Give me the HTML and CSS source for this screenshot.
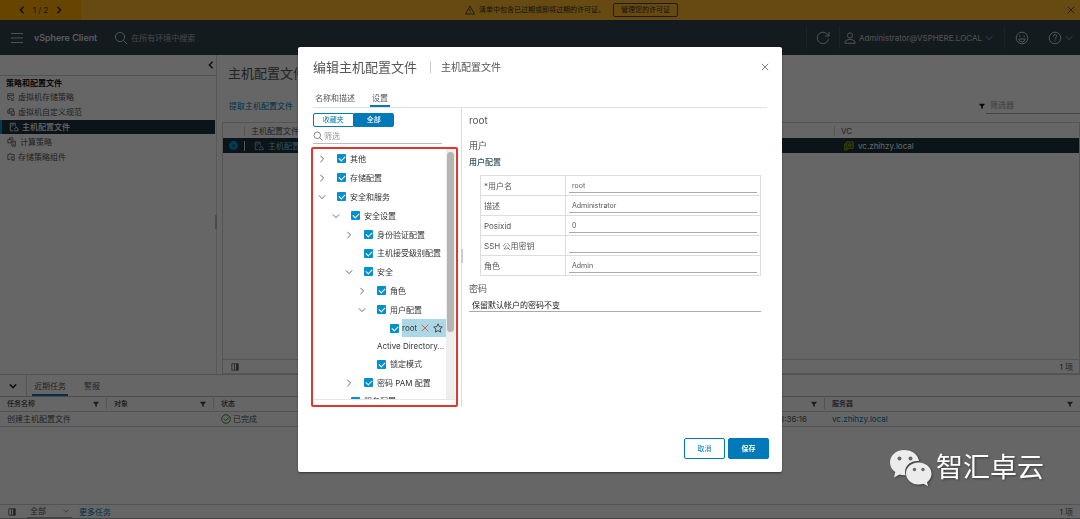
FILE: index.html
```html
<!DOCTYPE html>
<html lang="zh-CN">
<head>
<meta charset="utf-8">
<title>vSphere Client</title>
<link rel="stylesheet" href="styles.css">
</head>
<body>
<svg class="sprite" aria-hidden="true">
  <symbol id="i-right" viewBox="0 0 10 10"><path d="M3 1l4 4-4 4"/></symbol>
  <symbol id="i-left" viewBox="0 0 10 10"><path d="M7 1L3 5l4 4"/></symbol>
  <symbol id="i-down" viewBox="0 0 10 10"><path d="M1 3l4 4 4-4"/></symbol>
  <symbol id="i-close" viewBox="0 0 10 10"><path d="M1 1l8 8M9 1L1 9"/></symbol>
  <symbol id="i-search" viewBox="0 0 14 14"><circle cx="6" cy="6" r="4.6"/><path d="M9.4 9.4l4 4"/></symbol>
  <symbol id="i-funnel" viewBox="0 0 8 8"><path class="solid" d="M.5 1h7v1L5 4.500V8L3 7V4.500L.5 2z"/></symbol>
  <symbol id="i-cols" viewBox="0 0 10 10"><path d="M1 1h8v8H1zM4.500 1v8"/><path class="solid" d="M6.500 1H9v8H6.500z"/></symbol>
  <symbol id="i-storage" viewBox="0 0 10 10"><path d="M8 4V1H1v7h3M1 3.3h7M2.5 5.5h2M5 6l1.5 2L9 5M5 9h4"/></symbol>
  <symbol id="i-spec" viewBox="0 0 10 10"><path d="M3 6.5H1v-4h2M3 7V1h5v3M5 4h4v5H5z M5 6l4 3"/></symbol>
  <symbol id="i-host" viewBox="0 0 12 12"><path d="M5 10.5H1.5v-9h6V5M3 3.5h3M3 5.5h1M6 10.5h5M6.5 9L8 6.5h1.5L11 9v1.5"/></symbol>
  <symbol id="i-compute" viewBox="0 0 12 12"><path d="M1 3h4v4H1zM3 3V1h4v3M6 5h4v6H6zM7.300 7h1.500M7.300 9h1.500"/></symbol>
  <symbol id="i-comp" viewBox="0 0 10 10"><path d="M4 8H1V2h2V1h2v1h4v2M5 5l4 0v4H6M5 5v2l3 2"/></symbol>
</svg>

<div class="app">
  <div class="banner">
    <div class="pager">
      <button aria-label="上一条"><svg class="ico s8 bold"><use href="#i-left"/></svg></button>
      <span>1 / 2</span>
      <button aria-label="下一条"><svg class="ico s8 bold"><use href="#i-right"/></svg></button>
    </div>
    <div class="notice">
      <svg class="ico s10" viewBox="0 0 12 12"><path d="M6 1.200L11.300 10.800H.7zM6 4.500v3M6 8.500v1"/></svg>
      <span>清单中包含已过期或即将过期的许可证。</span>
      <button class="license">管理您的许可证</button>
    </div>
    <button class="dismiss" aria-label="关闭"><svg class="ico s8"><use href="#i-close"/></svg></button>
  </div>

  <header class="topbar">
    <button aria-label="菜单"><svg class="ico s12" viewBox="0 0 12 12"><path d="M0 1.500h12M0 6h12M0 10.500h12"/></svg></button>
    <span class="brand">vSphere Client</span>
    <label class="search"><svg class="ico s14"><use href="#i-search"/></svg><input type="text" placeholder="在所有环境中搜索" aria-label="搜索"></label>
    <button class="cell" aria-label="刷新"><svg class="ico s14" viewBox="0 0 14 14"><path d="M12.500 8.200A5.700 5.700 0 1 1 11.500 3.500L13 5M13 1v4H9"/></svg></button>
    <button class="cell user"><svg class="ico s12" viewBox="0 0 12 12"><circle cx="6" cy="3.500" r="2.600"/><path d="M1 11.300V9.500Q3 7.300 6 7.300t5 2.200v1.800z"/></svg><span>Administrator@VSPHERE.LOCAL</span><svg class="ico s8"><use href="#i-down"/></svg></button>
    <button class="cell face" aria-label="反馈"><svg class="ico s14" viewBox="0 0 14 14"><circle cx="7" cy="7" r="5.800"/><path d="M4.800 4.500v1.500M9.200 4.500v1.500M3.800 8h6.400Q9.800 11 7 11T3.800 8z"/></svg></button>
    <button class="help" aria-label="帮助"><svg class="ico s14" viewBox="0 0 14 14"><circle cx="7" cy="7" r="5.800"/><path d="M5.200 5.500Q5.200 3.700 7 3.700t1.800 1.700Q8.800 6.500 7 7.300v1.200M7 9.500v1"/></svg><svg class="ico s8"><use href="#i-down"/></svg></button>
  </header>

  <div class="workspace">
    <nav class="sidebar">
      <div class="collapse"><button aria-label="折叠"><svg class="ico s8 bold"><use href="#i-left"/></svg></button></div>
      <h2>策略和配置文件</h2>
      <a href="#"><svg class="ico s8"><use href="#i-storage"/></svg>虚拟机存储策略</a>
      <a href="#"><svg class="ico s8"><use href="#i-spec"/></svg>虚拟机自定义规范</a>
      <a href="#" class="current"><svg class="ico s10"><use href="#i-host"/></svg>主机配置文件</a>
      <a href="#"><svg class="ico s10"><use href="#i-compute"/></svg>计算策略</a>
      <a href="#"><svg class="ico s8"><use href="#i-comp"/></svg>存储策略组件</a>
    </nav>
    <main class="main">
      <h1>主机配置文件</h1>
      <div class="actions">
        <a href="#">提取主机配置文件</a>
        <label><svg class="ico s6"><use href="#i-funnel"/></svg><input type="text" placeholder="筛选器" aria-label="筛选器"></label>
      </div>
      <div class="grid">
        <table>
          <thead><tr><th class="pick"></th><th class="name"><span>主机配置文件名称</span></th><th class="vc"><span>VC</span></th></tr></thead>
          <tbody><tr><td class="pick"><input type="radio" checked aria-label="选择"></td><td class="name"><span><svg class="ico s10"><use href="#i-host"/></svg>主机配置文件</span></td><td class="vc"><span><svg class="ico s10 vcicon" viewBox="0 0 10 10"><path d="M3 7.500V9H.8V3H2.500M2.800 7.200V1H9v6.200zM4.800 3H7v2.200H4.800z"/></svg>vc.zhihzy.local</span></td></tr></tbody>
        </table>
        <div class="gridfoot"><svg class="ico s8"><use href="#i-cols"/></svg><span>1 项</span></div>
      </div>
    </main>
  </div>

  <section class="tasks">
    <div class="tasktabs">
      <button class="toggle" aria-label="折叠"><svg class="ico s8 bold"><use href="#i-down"/></svg></button>
      <button class="tab on">近期任务</button>
      <button class="tab">警报</button>
    </div>
    <table>
      <thead><tr>
        <th class="c"><span>任务名称<svg class="ico s6"><use href="#i-funnel"/></svg></span></th>
        <th class="c"><span>对象<svg class="ico s6"><use href="#i-funnel"/></svg></span></th>
        <th class="c"><span>状态</span></th>
        <th><span><svg class="ico s6"><use href="#i-funnel"/></svg></span></th>
        <th class="server"><span>服务器<svg class="ico s6"><use href="#i-funnel"/></svg></span></th>
      </tr></thead>
      <tbody><tr>
        <td>创建主机配置文件</td><td></td>
        <td><span class="done"><svg class="ico s10" viewBox="0 0 10 10"><circle cx="5" cy="5" r="4.300"/><path d="M2.800 5l1.700 1.700L7.500 3.500"/></svg>已完成</span></td>
        <td class="time">13:36:16</td><td><a href="#">vc.zhihzy.local</a></td>
      </tr></tbody>
    </table>
    <div class="taskfoot"><svg class="ico s8"><use href="#i-cols"/></svg><span class="pickall"><select aria-label="任务范围"><option>全部</option></select><svg class="ico s6"><use href="#i-down"/></svg></span><a href="#">更多任务</a><span class="count">1 项</span></div>
  </section>
</div>

<div class="backdrop">
  <div class="modal" role="dialog" aria-labelledby="dlg">
    <div class="mhead">
      <h2 id="dlg">编辑主机配置文件</h2><span class="sub">主机配置文件</span>
      <button aria-label="关闭"><svg class="ico s8"><use href="#i-close"/></svg></button>
    </div>
    <div class="mtabs"><button>名称和描述</button><button class="on">设置</button></div>
    <div class="mbody">
      <div class="left">
        <div class="seg"><button>收藏夹</button><button class="on">全部</button></div>
        <label class="filter"><svg class="ico s10"><use href="#i-search"/></svg><input type="text" placeholder="筛选" aria-label="筛选"></label>
        <div class="treebox">
          <div class="view">
            <ul class="tree">
              <li class="l0"><svg class="ico s8"><use href="#i-right"/></svg><label><input type="checkbox" checked>其他</label></li>
              <li class="l0"><svg class="ico s8"><use href="#i-right"/></svg><label><input type="checkbox" checked>存储配置</label></li>
              <li class="l0"><svg class="ico s8"><use href="#i-down"/></svg><label><input type="checkbox" checked>安全和服务</label></li>
              <li class="l1"><svg class="ico s8"><use href="#i-down"/></svg><label><input type="checkbox" checked>安全设置</label></li>
              <li class="l2"><svg class="ico s8"><use href="#i-right"/></svg><label><input type="checkbox" checked>身份验证配置</label></li>
              <li class="l2 leaf"><label><input type="checkbox" checked>主机接受级别配置</label></li>
              <li class="l2"><svg class="ico s8"><use href="#i-down"/></svg><label><input type="checkbox" checked>安全</label></li>
              <li class="l3"><svg class="ico s8"><use href="#i-right"/></svg><label><input type="checkbox" checked>角色</label></li>
              <li class="l3"><svg class="ico s8"><use href="#i-down"/></svg><label><input type="checkbox" checked>用户配置</label></li>
              <li class="l4 leaf"><input type="checkbox" checked id="root"><span class="picked"><label for="root">root</label><svg class="ico s8 red"><use href="#i-close"/></svg><svg class="ico s10" viewBox="0 0 12 12"><path d="M6 1l1.500 3.400 3.700.4-2.800 2.500.8 3.700L6 9.100 2.800 11l.8-3.700L.8 4.800l3.700-.4z"/></svg></span></li>
              <li class="l3 leaf plain">Active Directory...</li>
              <li class="l3 leaf"><label><input type="checkbox" checked>锁定模式</label></li>
              <li class="l2"><svg class="ico s8"><use href="#i-right"/></svg><label><input type="checkbox" checked>密码 PAM 配置</label></li>
              <li class="l1 leaf"><label><input type="checkbox" checked>服务配置</label></li>
            </ul>
            <div class="bar"><div class="thumb"></div></div>
          </div>
        </div>
      </div>
      <div class="detail">
        <h3>root</h3>
        <h4>用户</h4>
        <h5>用户配置</h5>
        <table class="form">
          <tr><th><label for="f1">*用户名</label></th><td><input id="f1" type="text" value="root"></td></tr>
          <tr><th><label for="f2">描述</label></th><td><input id="f2" type="text" value="Administrator"></td></tr>
          <tr><th><label for="f3">Posixid</label></th><td><input id="f3" type="text" value="0"></td></tr>
          <tr><th><label for="f4">SSH 公用密钥</label></th><td><input id="f4" type="text"></td></tr>
          <tr><th><label for="f5">角色</label></th><td><input id="f5" type="text" value="Admin"></td></tr>
        </table>
        <h4><label for="pw">密码</label></h4>
        <select id="pw"><option>保留默认帐户的密码不变</option></select>
      </div>
    </div>
    <div class="mfoot"><button>取消</button><button class="primary">保存</button></div>
  </div>
</div>

<div class="mark">
  <svg viewBox="0 0 43 38" width="43" height="38">
    <path fill="#ececec" d="M15 1C7 1 1 6.500 1 13.500c0 4 2 7.300 5.300 9.600L5 28.500l5.500-3q3 .8 6 .7C14 17 22 11 30 12 29 5.500 23 1 15 1z"/>
    <path fill="#ececec" d="M29.500 13.500C22 13.500 17 18.500 17 24.500s5.500 11 12.500 11q2.500 0 5-.8l4.500 2.500-1-4c2.700-2 4.500-5 4.500-8.500 0-6.200-5.500-11.200-13-11.200z"/>
    <g fill="#666"><circle cx="10.500" cy="9.500" r="2"/><circle cx="21.500" cy="9.500" r="2"/><circle cx="25.500" cy="20.500" r="1.700"/><circle cx="34" cy="20.500" r="1.700"/></g>
  </svg>
  <span>智汇卓云</span>
</div>
</body>
</html>
```

FILE: styles.css
```css
* { box-sizing: border-box; }
body {
  margin: 0;
  font: 8px/12px Inter, "Noto Sans CJK SC", sans-serif;
  color: #565656;
}
h1, h2, h3, h4, h5, ul { margin: 0; padding: 0; font-weight: 400; list-style: none; }
button, input, select { font: inherit; color: inherit; background: none; border: 0; padding: 0; margin: 0; border-radius: 0; min-width: 0; outline: 0; }
button { display: inline-flex; align-items: center; justify-content: center; }
select { appearance: none; }
a { color: #0079b8; text-decoration: none; }
table { border-collapse: collapse; width: 100%; table-layout: fixed; }
th, td { padding: 0; text-align: left; font-weight: 400; }
.sprite { position: absolute; width: 0; height: 0; }
.ico { fill: none; stroke: currentColor; stroke-width: 1; flex: none; }
.solid { fill: currentColor; stroke: none; }
.bold { stroke-width: 2; }
.s6 { width: 6px; height: 6px; }
.s8 { width: 8px; height: 8px; }
.s10 { width: 10px; height: 10px; }
.s12 { width: 12px; height: 12px; }
.s14 { width: 14px; height: 14px; }

.app { min-height: 100vh; display: flex; flex-direction: column; background: #fff; }

.banner { display: flex; align-items: center; height: 20px; background: #ffb92c; color: #333; font-size: 7px; }
.pager { display: flex; align-items: center; justify-content: center; gap: 7px; width: 81px; height: 20px; background: #ffac00; font-size: 8px; }
.notice { flex: 1; display: flex; align-items: center; justify-content: center; gap: 4px; }
.license { height: 14px; margin-left: 4px; padding: 0 7px; border: 1px solid #444; border-radius: 2px; }
.dismiss { width: 18px; }

.topbar { display: flex; align-items: center; height: 35px; padding-left: 11px; background: #34444f; color: #c8ced6; }
.brand { margin: 0 17px 0 11px; font-size: 9px; font-weight: 500; color: #eef; }
.search { flex: 1; display: flex; align-items: center; gap: 3px; }
.search input { width: 100px; }
.search input::placeholder { color: #aab4be; }
.cell { height: 23px; padding: 0 9px; border-left: 1px solid #455769; }
.user { gap: 3px; padding: 0 11px 0 4px; }
.face { padding: 0 10px; }
.help { gap: 3px; padding: 0 7px 0 9px; }

.workspace { flex: 1; display: flex; min-height: 319px; }
.sidebar { position: relative; width: 217px; display: flex; flex-direction: column; gap: 1px; border-right: 1px solid #ddd; }
.sidebar::after { content: ""; position: absolute; right: -1px; top: 50%; width: 2px; height: 14px; background: #bbb; }
.collapse { height: 21px; display: flex; justify-content: flex-end; padding-right: 1px; border-bottom: 1px solid #ccc; color: #333; }
.sidebar h2 { padding-left: 6px; font-size: 8px; line-height: 12px; font-weight: 700; color: #111; }
.sidebar a { display: flex; align-items: center; gap: 3px; height: 14px; padding-left: 7px; color: #565656; }
.sidebar a.current { margin-right: 1px; border-left: 2px solid #0095d3; background: #1d343f; color: #fff; font-weight: 500; }
.main { flex: 1; display: flex; flex-direction: column; margin-left: 5px; }
.main h1 { padding: 8px 0 0 6px; font-size: 13px; line-height: 20px; color: #565656; }
.actions { display: flex; align-items: center; justify-content: space-between; padding: 15px 0 8px 7px; }
.actions label { display: flex; align-items: center; gap: 1px; color: #111; }
.actions input { width: 94px; height: 16px; padding: 0 0 2px 4px; border-bottom: 1px solid #aaa; }
.grid { flex: 1; display: flex; flex-direction: column; border: 1px solid #d5d5d5; }
.grid th, .grid td { height: 15px; }
.grid tbody { background: #1d343f; color: #fff; }
.grid .pick { width: 21px; padding-left: 6px; }
.grid .vc { width: 245px; }
.grid table span { display: flex; align-items: center; gap: 4px; height: 10px; padding-left: 6px; border-left: 1px solid #d5d5d5; }
.grid tbody span { padding-left: 9px; }
.grid tbody .name { color: #89cbdf; }
.grid tbody .vc span { padding-left: 9px; border-color: transparent; }
.grid .vcicon { color: #a5b800; }
.pick input { display: block; width: 9px; height: 9px; appearance: none; border: 3px solid #0095d3; border-radius: 50%; background: #1d5a78; }
.gridfoot { margin-top: auto; height: 14px; display: flex; align-items: center; justify-content: space-between; padding: 0 6px 0 8px; border-top: 1px solid #d5d5d5; }

.tasks { display: flex; flex-direction: column; min-height: 145px; border-top: 1px solid #ccc; }
.tasktabs { display: flex; height: 22px; border-bottom: 1px solid #bbb; }
.toggle { width: 27px; border-right: 1px solid #d5d5d5; color: #333; }
.tab { margin: 0 0 0 14px; padding: 2px 2px 0; border-bottom: 2px solid transparent; }
.tab.on { margin-left: 5px; border-color: #0079b8; }
.tasks thead { font-size: 7px; }
.tasks thead tr { height: 14px; border-bottom: 1px solid #ccc; }
.tasks tbody tr { height: 15px; border-bottom: 1px solid #ccc; }
.tasks th { font-weight: 500; color: #444; }
.tasks th.c { width: 107px; }
.tasks th.server { width: 255px; }
.tasks th span { display: flex; align-items: center; justify-content: space-between; height: 11px; padding: 0 7px; border-right: 1px solid #d5d5d5; }
.tasks th:nth-child(4) span { justify-content: flex-end; }
.tasks th:last-child span { border: 0; }
.tasks td { padding: 0 7px; }
.tasks .time { padding-right: 18px; text-align: right; }
.done { display: flex; align-items: center; gap: 2px; }
.done svg { color: #3c9a1e; }
.taskfoot { display: flex; align-items: center; height: 15px; margin-top: auto; padding: 0 7px 0 8px; border-top: 1px solid #ccc; border-bottom: 1px solid #aaa; }
.pickall { display: flex; align-items: center; width: 45px; margin: 0 7px 0 11px; padding: 0 3px; border-bottom: 1px solid #aaa; }
.pickall select { flex: 1; }
.count { margin-left: auto; }

.backdrop { position: fixed; inset: 0; display: flex; align-items: center; justify-content: center; background: rgba(0, 0, 0, 0.6); }
.modal { width: 484px; max-width: 100%; background: #fff; border-radius: 2px; box-shadow: 0 1px 2px rgba(0, 0, 0, 0.5); }
.mhead { display: flex; align-items: center; padding: 10px 13px 0 15px; }
.mhead h2 { padding-right: 13px; font-size: 13px; line-height: 20px; color: #565656; }
.mhead .sub { padding-left: 10px; border-left: 1px solid #ccc; font-size: 10px; }
.mhead button { margin-left: auto; color: #56656f; }
.mtabs { display: flex; gap: 13px; margin: 12px 15px 0; border-bottom: 1px solid #dde2e5; }
.mtabs button { height: 18px; padding: 2px 2px 0; border-bottom: 2px solid transparent; }
.mtabs .on { border-color: #0079b8; }
.mbody { display: flex; padding: 0 21px 0 13px; }
.left { position: relative; width: 152px; border-right: 1px solid #ddd; }
.left::after { content: ""; position: absolute; right: -2px; top: 141px; width: 2px; height: 14px; background: #ccc; }
.seg { display: flex; width: 81px; margin: 5px 0 0 2px; font-size: 7px; }
.seg button { flex: 1; height: 14px; border: 1px solid #0079b8; border-radius: 2px 0 0 2px; color: #0079b8; }
.seg .on { border-radius: 0 2px 2px 0; background: #0079b8; color: #fff; font-weight: 500; }
.filter { display: flex; align-items: center; width: 129px; margin: 2px 0 3px 2px; border-bottom: 1px solid #bbb; gap: 1px; }
.filter input { flex: 1; height: 14px; }
input::placeholder { color: #999; opacity: 1; }
.treebox { width: 147px; padding: 0 1px 5px; border: 2px solid #e2372f; border-radius: 2px; }
.view { display: flex; height: 251px; overflow: hidden; border-bottom: 1px solid #e5e5e5; }
.tree { flex: 1; min-width: 0; color: #333; }
.tree li { display: flex; align-items: center; gap: 11px; height: 19px; white-space: nowrap; }
.tree .leaf { height: 18px; }
.tree li > svg { color: #444; }
.tree label { display: flex; align-items: center; gap: 4px; }
.tree input { appearance: none; flex: none; width: 9px; height: 9px; border-radius: 1px; background: #0090cc; display: grid; place-items: center; }
.tree input::before { content: ""; width: 5px; height: 3px; margin-bottom: 1px; border: solid #fff; border-width: 0 0 1px 1px; rotate: -45deg; }
.l0 { padding-left: 4px; }
.l1 { padding-left: 18px; }
.l2 { padding-left: 31px; }
.l3 { padding-left: 44px; }
.tree .l1.leaf { padding-left: 37px; }
.tree .l2.leaf { padding-left: 50px; }
.tree .l3.leaf { padding-left: 63px; }
.tree .l4.leaf { padding-left: 76px; gap: 3px; }
.picked { flex: 1; display: flex; align-items: center; justify-content: space-between; height: 18px; padding-right: 3px; background: #acd8e6; }
.red { color: #e04030; }
.bar { width: 9px; padding: 3px 1px; background: #eee; }
.thumb { height: 180px; border-radius: 4px; background: #b5b5b5; }
.detail { flex: 1; padding: 4px 0 0 7px; }
.detail h3 { font-size: 10px; line-height: 16px; }
.detail h4 { margin: 11px 0 3px; font-size: 9px; line-height: 14px; }
.detail h5 { font-size: 8px; line-height: 12px; font-weight: 500; color: #31505e; }
.form { width: auto; margin: 7px 0 0 11px; min-width: 281px; }
.form th, .form td { height: 20px; border: 1px solid #ddd; padding: 0 3px; }
.form th { width: 85px; }
.form input { display: block; width: 100%; height: 14px; padding: 0 3px; border-bottom: 1px solid #aaa; font-size: 7px; }
.form + h4 { margin: 6px 0 2px; }
.detail select { display: block; width: 100%; height: 14px; padding: 0 3px; border-bottom: 1px solid #aaa; color: #222; }
.mfoot { display: flex; justify-content: flex-end; gap: 3px; padding: 31px 13px 13px; }
.mfoot button { width: 41px; height: 21px; border: 1px solid #0079b8; border-radius: 2px; font-size: 7px; color: #0079b8; }
.mfoot .primary { background: #0079b8; color: #fff; font-weight: 700; }

.mark { position: fixed; right: 36px; bottom: 32px; display: flex; align-items: center; gap: 4px; color: #fff; font-size: 27px; line-height: 36px; }
.mark svg, .mark span { filter: drop-shadow(1px 1px 1px rgba(0, 0, 0, 0.4)); }
```
